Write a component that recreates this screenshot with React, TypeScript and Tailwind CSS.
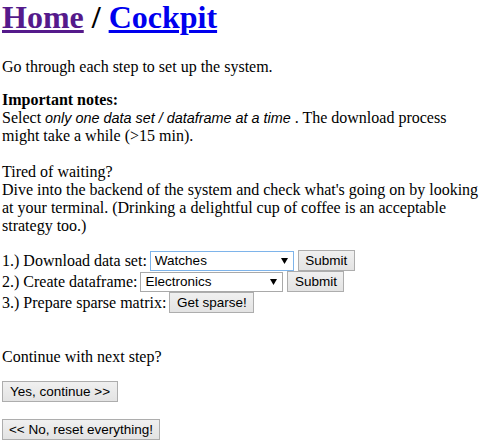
import { useState } from "react"

const Arrow = () => (
  <svg className="pointer-events-none absolute right-[6px] top-[7px]" width="7" height="6" viewBox="0 0 7 6">
    <polygon points="0,0 7,0 3.5,6" fill="#000" />
  </svg>
)

type selectProps = {
  value: string,
  options: string[],
  width: string,
  focused?: boolean,
  onChange: (v: string) => void
}

const Select = ({value, options, width, focused, onChange}: selectProps) => {
  return (
    <div className={`relative ${width} h-[20px]`}>
      <select
        value={value}
        onChange={(e) => onChange(e.target.value)}
        className={`appearance-none w-full h-full bg-white pl-[4px] pr-[18px] border outline-none font-['Liberation_Sans',Arial,sans-serif] text-[13.5px] leading-none text-black ${focused ? "border-[#7eb4ea]" : "border-[#a9a9a9]"}`}
      >
        {options.map((o) => (
          <option key={o} value={o}>{o}</option>
        ))}
      </select>
      <Arrow />
    </div>
  )
}

const Button = ({label, width}: {label: string, width: string}) => (
  <button className={`${width} h-[21px] bg-gradient-to-b from-[#f0f0f0] to-[#e3e3e3] border border-[#adadad] font-['Liberation_Sans',Arial,sans-serif] text-[13.5px] leading-none text-black`}>
    {label}
  </button>
)

const App = () => {
  const [dataset, setDataset] = useState("Watches")
  const [frame, setFrame] = useState("Electronics")
  const categories = ["Watches", "Electronics", "Books", "Music"]

  return (
    <div className="min-h-screen bg-white pl-[2px] font-['Liberation_Serif','Times_New_Roman',serif] text-[16px] leading-[18px] text-black">
      <h1 className="text-[32px] font-bold leading-[34px]">
        <a href="#" className="underline text-[#551a8b]">Home</a> / <a href="#" className="underline text-[#0000ee]">Cockpit</a>
      </h1>

      <p className="mt-[24px]">Go through each step to set up the system.</p>

      <p className="mt-[15px]">
        <b>Important notes:</b>
        <br />
        Select <i className="font-['Liberation_Sans',Arial,sans-serif] text-[14.4px]">only one data set / dataframe at a time </i>. The download process might take a while (&gt;15 min).
      </p>

      <p className="mt-[18px]">
        Tired of waiting?
        <br />
        Dive into the backend of the system and check what's going on by looking at your terminal. (Drinking a delightful cup of coffee is an acceptable strategy too.)
      </p>

      <div className="mt-[15px] flex flex-col">
        <div className="flex h-[21px] items-center gap-[3px]">
          <span>1.) Download data set:</span>
          <Select value={dataset} options={categories} width="w-[144px]" focused onChange={setDataset} />
          <span className="ml-[1px]"><Button label="Submit" width="w-[57px]" /></span>
        </div>
        <div className="flex h-[21px] items-center gap-[3px]">
          <span>2.) Create dataframe:</span>
          <Select value={frame} options={categories} width="w-[143px]" onChange={setFrame} />
          <span className="ml-[1px]"><Button label="Submit" width="w-[57px]" /></span>
        </div>
        <div className="flex h-[21px] items-center gap-[3px]">
          <span>3.) Prepare sparse matrix:</span>
          <Button label="Get sparse!" width="w-[85px]" />
        </div>
      </div>

      <p className="mt-[35px]">Continue with next step?</p>

      <div className="mt-[15px] flex flex-col items-start gap-[17px]">
        <Button label="Yes, continue >>" width="w-[116px]" />
        <Button label="<< No, reset everything!" width="w-[158px]" />
      </div>
    </div>
  )
}

export default App
